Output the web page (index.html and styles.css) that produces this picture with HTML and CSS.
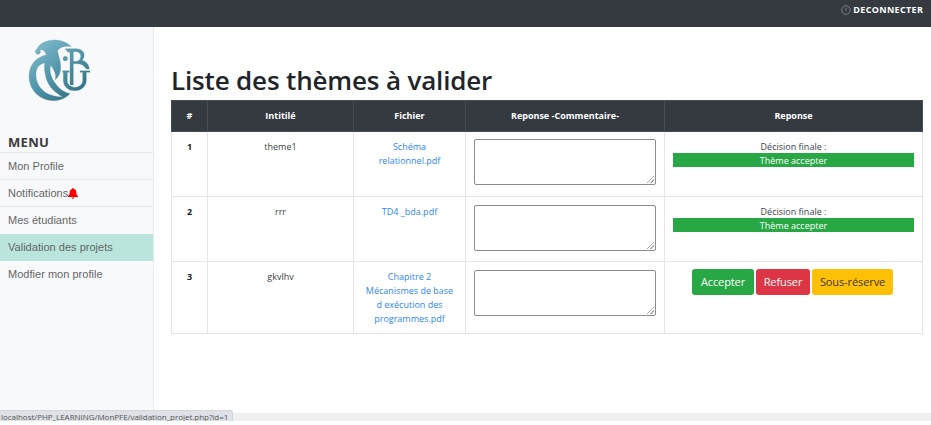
FILE: index.html
```html
<!DOCTYPE html>
<html lang="fr">
<head>
<meta charset="utf-8">
<title>Validation des projets</title>
<link rel="stylesheet" href="styles.css">
</head>
<body>
<header class="topbar">
  <a class="logout"><svg class="power" viewBox="0 0 10 10"><circle cx="5" cy="5" r="4.3"/><path d="M5 2.4V5.8"/></svg><span>DECONNECTER</span></a>
</header>
<div class="page">
  <aside class="sidebar">
    <svg class="logo" viewBox="0 0 210 210">
      <defs><linearGradient id="teal" gradientUnits="userSpaceOnUse" x1="30" y1="20" x2="170" y2="190"><stop offset="0" stop-color="#82bdce"/><stop offset=".5" stop-color="#4f95a9"/><stop offset="1" stop-color="#2f6c80"/></linearGradient></defs>
      <g fill="url(#teal)" stroke="#6d8b94" stroke-width=".8">
        <path d="M38 58C30 57 29 45 36 42C43 24 66 15 91 15C110 16 128 23 139 35C122 31 106 36 98 46C98 58 107 75 107 94C108 111 102 125 91 134C95 118 86 103 77 90C72 110 79 130 93 148C104 163 117 172 135 176C114 198 83 202 56 191C22 177 8 142 13 112C18 83 37 66 64 59C60 48 53 42 44 45C49 51 46 58 38 58ZM60 84C39 87 32 103 33 122C34 157 65 186 112 185C85 170 66 149 61 119C58 104 57 94 60 84Z" fill-rule="evenodd"/>
        <circle cx="121" cy="71" r="7"/>
        <path fill-rule="evenodd" d="M121 41H155C178 42 184 63 171 76C184 80 192 89 193 102H184C178 93 170 86 158 86H145V150H135V52C129 52 124 48 121 41ZM145 50V79H155C172 75 171 51 155 50Z"/>
        <path d="M113 107H133V112H127V138C129 163 170 163 173 138V112H165V107H195V112H184V138C180 177 118 177 115 138V112H113Z"/>
      </g>
    </svg>
    <h2 class="menu-title">MENU</h2>
    <nav class="menu">
      <a>Mon Profile</a>
      <a>Notifications<svg class="bell" viewBox="0 0 10 11"><path d="M5 0C5.6 0 5.9.4 5.9.9C7.7 1.3 8.3 2.7 8.3 4.3C8.3 6.4 9 7.3 10 8.1V8.9H0V8.1C1 7.3 1.7 6.4 1.7 4.3C1.7 2.7 2.3 1.3 4.1.9C4.1.4 4.4 0 5 0ZM3.7 9.5H6.3C6.1 11.3 3.9 11.3 3.7 9.5Z"/></svg></a>
      <a>Mes étudiants</a>
      <a class="active">Validation des projets</a>
      <a>Modfier mon profile</a>
    </nav>
  </aside>
  <main class="content">
    <h1><span>Liste des thèmes à valider</span></h1>
    <table class="themes">
      <colgroup><col class="c-num"><col class="c-title"><col class="c-file"><col class="c-comment"><col class="c-answer"></colgroup>
      <thead><tr><th>#</th><th>Intitilé</th><th>Fichier</th><th>Reponse -Commentaire-</th><th>Reponse</th></tr></thead>
      <tbody>
        <tr><th>1</th><td>theme1</td><td><a>Schéma<br>relationnel.pdf</a></td><td><textarea></textarea></td><td>Décision finale :<div class="accepted">Thème accepter</div></td></tr>
        <tr><th>2</th><td>rrr</td><td><a>TD4 _bda.pdf</a></td><td><textarea></textarea></td><td>Décision finale :<div class="accepted">Thème accepter</div></td></tr>
        <tr class="last"><th>3</th><td>gkvlhv</td><td><a>Chapitre 2<br>Mécanismes de base<br>d exécution des<br>programmes.pdf</a></td><td><textarea></textarea></td><td><div class="actions"><button class="btn green">Accepter</button><button class="btn red">Refuser</button><button class="btn yellow">Sous-réserve</button></div></td></tr>
      </tbody>
    </table>
  </main>
</div>
<footer class="bottom"><div class="status"><span>localhost/PHP_LEARNING/MonPFE/validation_projet.php?id=1</span></div></footer>
</body>
</html>
```
FILE: styles.css
```css
* { box-sizing: border-box; }
body { margin: 0; height: 425px; overflow: hidden; background: #fff; color: #212529; font-family: "Open Sans", "Noto Sans", sans-serif; }
.topbar { height: 27px; background: #343a40; display: flex; justify-content: flex-end; padding: 3px 8px 0 0; }
.logout { display: flex; align-items: center; height: 14px; gap: 2px; color: #fff; font-size: 9px; font-weight: 700; line-height: 14px; letter-spacing: .35px; }
.logout span { margin-right: -.3px; }
.power { width: 10px; height: 10px; fill: none; stroke: #8b9096; stroke-width: .8; }
.page { display: flex; height: 386px; }
.sidebar { width: 154px; flex: none; background: #f7f9fb; border-right: 1px solid #e9ecef; }
.logo { display: block; width: 70px; height: 70px; margin: 8px 0 0 25px; }
.menu-title { margin: 28px 0 0 8px; height: 19px; font-size: 13px; line-height: 19px; font-weight: 700; color: #3b3b3d; letter-spacing: .3px; }
.menu a { display: flex; align-items: center; height: 27px; padding: 0 0 0 8px; border-top: 1px solid #e6e9ec; font: 11px/26px "Liberation Sans", sans-serif; letter-spacing: .02px; color: #666; }
.menu a.active { height: 28px; padding-bottom: 1px; background: #b9e5dd; border-color: #f7f9fb; }
.menu a.active + a { margin-top: -1px; border-color: transparent; }
.bell { width: 10px; height: 11px; fill: #f00; }
.content { padding: 34px 0 0 17px; }
h1 { margin: 0; height: 39px; font-size: 26px; line-height: 38px; font-weight: 600; white-space: nowrap; letter-spacing: -.16px; }
.themes { width: 752px; table-layout: fixed; border-collapse: collapse; font-size: 9px; line-height: 14px; text-align: center; }
.c-num { width: 36px; } .c-title { width: 146px; } .c-file { width: 112px; } .c-comment { width: 199px; } .c-answer { width: 258px; }
.themes th, .themes td { border: 1px solid #e2e6ea; padding: 8px 8px 0; vertical-align: top; white-space: nowrap; }
.themes thead th { height: 31px; background: #343a40; color: #fff; border-color: #454d55; }
.themes tbody tr { height: 65px; }
.themes tbody tr.last { height: 72px; }
.themes td { color: #3e4246; }
.themes td a { color: #2f86f6; }
textarea { display: block; width: 182px; height: 46px; margin: 0; border: 1px solid #8c8c8c; border-radius: 2px; resize: none; background: linear-gradient(135deg, transparent 46%, #aaa 46% 54%, transparent 54% 71%, #aaa 71% 79%, transparent 79%) right 1px bottom 1px / 7px 7px no-repeat #fff; }
tr:first-child textarea { margin-top: -1px; }
.accepted { height: 14px; margin-top: -1px; background: #28a745; color: #fff; line-height: 15px; }
.actions { display: flex; justify-content: center; gap: 2px; margin: -1px 2px 0 0; }
.btn { height: 26px; padding: 0; border: 0; border-radius: 3px; font: 11px/26px "Open Sans", "Noto Sans", sans-serif; letter-spacing: -.1px; color: #fff; }
.green { width: 62px; background: #28a745; }
.red { width: 54px; background: #dc3545; }
.yellow { width: 81px; background: #ffc107; color: #3d3520; }
.bottom { position: relative; height: 8px; background: #f0f0f0; }
.status { position: absolute; left: 0; bottom: 0; width: 233px; height: 11px; overflow: hidden; background: #dee1e6; border-top: 1px solid #d2d5d9; border-right: 1px solid #d2d5d9; border-radius: 0 3px 0 0; color: #555; font-size: 8px; line-height: 12px; letter-spacing: -.03px; white-space: nowrap; padding-left: 1px; }
```
